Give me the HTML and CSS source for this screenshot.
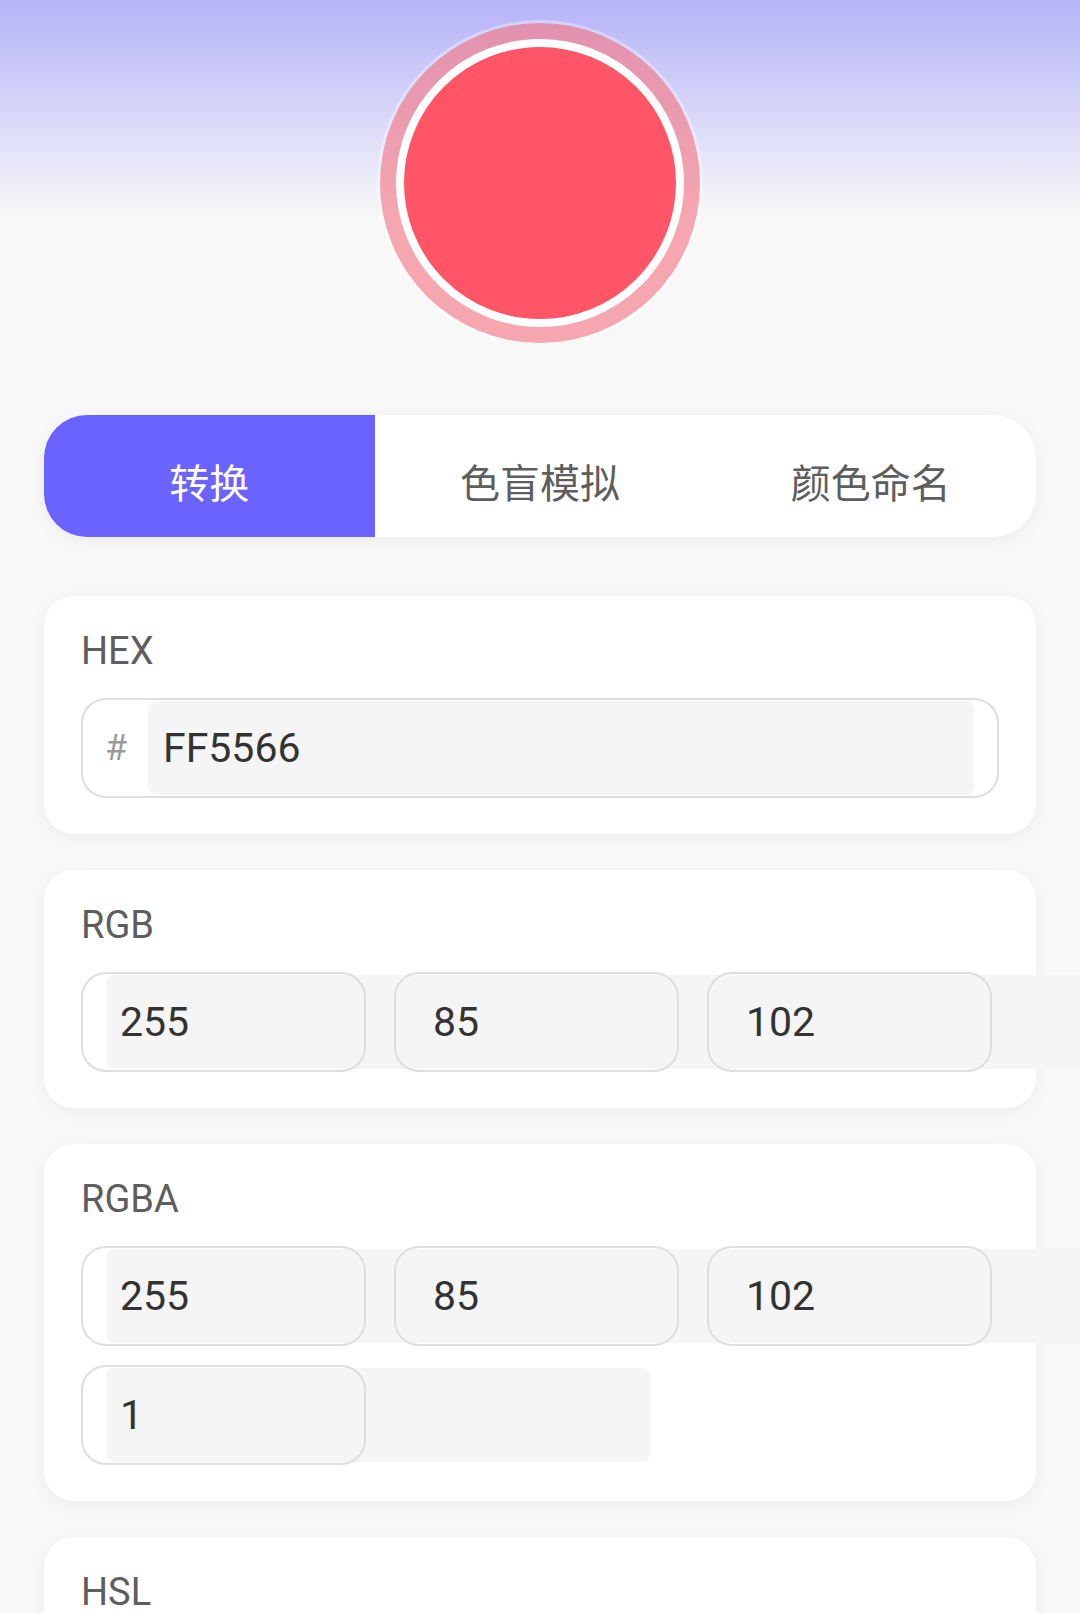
FILE: index.html
```html
<!DOCTYPE html>
<html lang="zh-CN">
<head>
<meta charset="utf-8">
<title>颜色转换</title>
<link rel="stylesheet" href="styles.css">
</head>
<body>
<div class="page">
  <header class="hero">
    <div class="swatch"></div>
  </header>

  <nav class="tabs">
    <div class="tab active">转换</div>
    <div class="tab">色盲模拟</div>
    <div class="tab">颜色命名</div>
  </nav>

  <section class="card">
    <div class="label">HEX</div>
    <div class="field hex">
      <span class="hash">#</span>
      <div class="input">FF5566</div>
    </div>
  </section>

  <section class="card">
    <div class="label">RGB</div>
    <div class="row">
      <div class="field"><div class="input">255</div></div>
      <div class="field"><div class="input">85</div></div>
      <div class="field"><div class="input">102</div></div>
    </div>
  </section>

  <section class="card">
    <div class="label">RGBA</div>
    <div class="row">
      <div class="field"><div class="input">255</div></div>
      <div class="field"><div class="input">85</div></div>
      <div class="field"><div class="input">102</div></div>
    </div>
    <div class="row">
      <div class="field"><div class="input">1</div></div>
    </div>
  </section>

  <section class="card last">
    <div class="label">HSL</div>
  </section>
</div>
</body>
</html>
```

FILE: styles.css
```css
* {
  box-sizing: border-box;
}

html, body {
  margin: 0;
  padding: 0;
  background: #f8f8f8;
}

.page {
  min-height: 1613px;
  overflow-x: clip;
  background: linear-gradient(to bottom, #b5b4f7 0px, #d3d2f8 100px, #f8f8f8 215px) no-repeat #f8f8f8;
  font-family: Roboto, "Noto Sans CJK SC", sans-serif;
  padding-bottom: 40px;
}

.hero {
  padding-top: 39px;
  display: flex;
  justify-content: center;
}

.swatch {
  width: 288px;
  height: 288px;
  border-radius: 50%;
  background: #ff5566;
  border: 8px solid #ffffff;
  box-shadow: 0 0 0 16px rgba(240, 82, 100, 0.5), 0 0 0 19px rgba(255, 255, 255, 0.35);
}

.tabs {
  margin: 88px 44px 0;
  height: 122px;
  display: grid;
  grid-template-columns: 1fr 1fr 1fr;
  background: #ffffff;
  border-radius: 43px;
  overflow: hidden;
  box-shadow: 0 4px 18px rgba(0, 0, 0, 0.05);
}

.tab {
  display: flex;
  align-items: center;
  justify-content: center;
  padding-top: 10px;
  font-family: "Noto Sans CJK SC", sans-serif;
  font-size: 40px;
  color: #5e5e5e;
}

.tab.active {
  background: #6b63ff;
  color: #ffffff;
}

.card {
  margin: 36.5px 44px 0;
  background: #ffffff;
  border-radius: 30px;
  padding: 33px 37px 36px;
  box-shadow: 0 4px 18px rgba(0, 0, 0, 0.05);
}

.card.last {
  min-height: 160px;
}

.tabs + .card {
  margin-top: 59px;
}

.label {
  font-size: 38px;
  line-height: 1.2;
  color: #5e5e5e;
  margin-bottom: 23px;
}

.row {
  display: flex;
  gap: 28px;
}

.row + .row {
  margin-top: 19px;
}

.field {
  position: relative;
  width: 285px;
  height: 100px;
  padding: 3px 0 3px 25px;
  display: flex;
}

.field::after {
  content: "";
  position: absolute;
  inset: 0;
  border: 2px solid #dedede;
  border-radius: 25px;
  z-index: 1;
  pointer-events: none;
}

.input {
  flex: 0 0 544px;
  height: 94px;
  background: #f5f5f5;
  border-radius: 8px;
  display: flex;
  align-items: center;
  padding-left: 14px;
  font-size: 41px;
  color: #333333;
}

.field.hex {
  width: auto;
  padding: 3px 25px 3px 24px;
  align-items: center;
}

.hash {
  font-size: 36px;
  color: #9a9a9a;
  width: 23px;
  margin-right: 20px;
}

.field.hex .input {
  flex: 1 1 auto;
  padding-left: 15px;
}
```
